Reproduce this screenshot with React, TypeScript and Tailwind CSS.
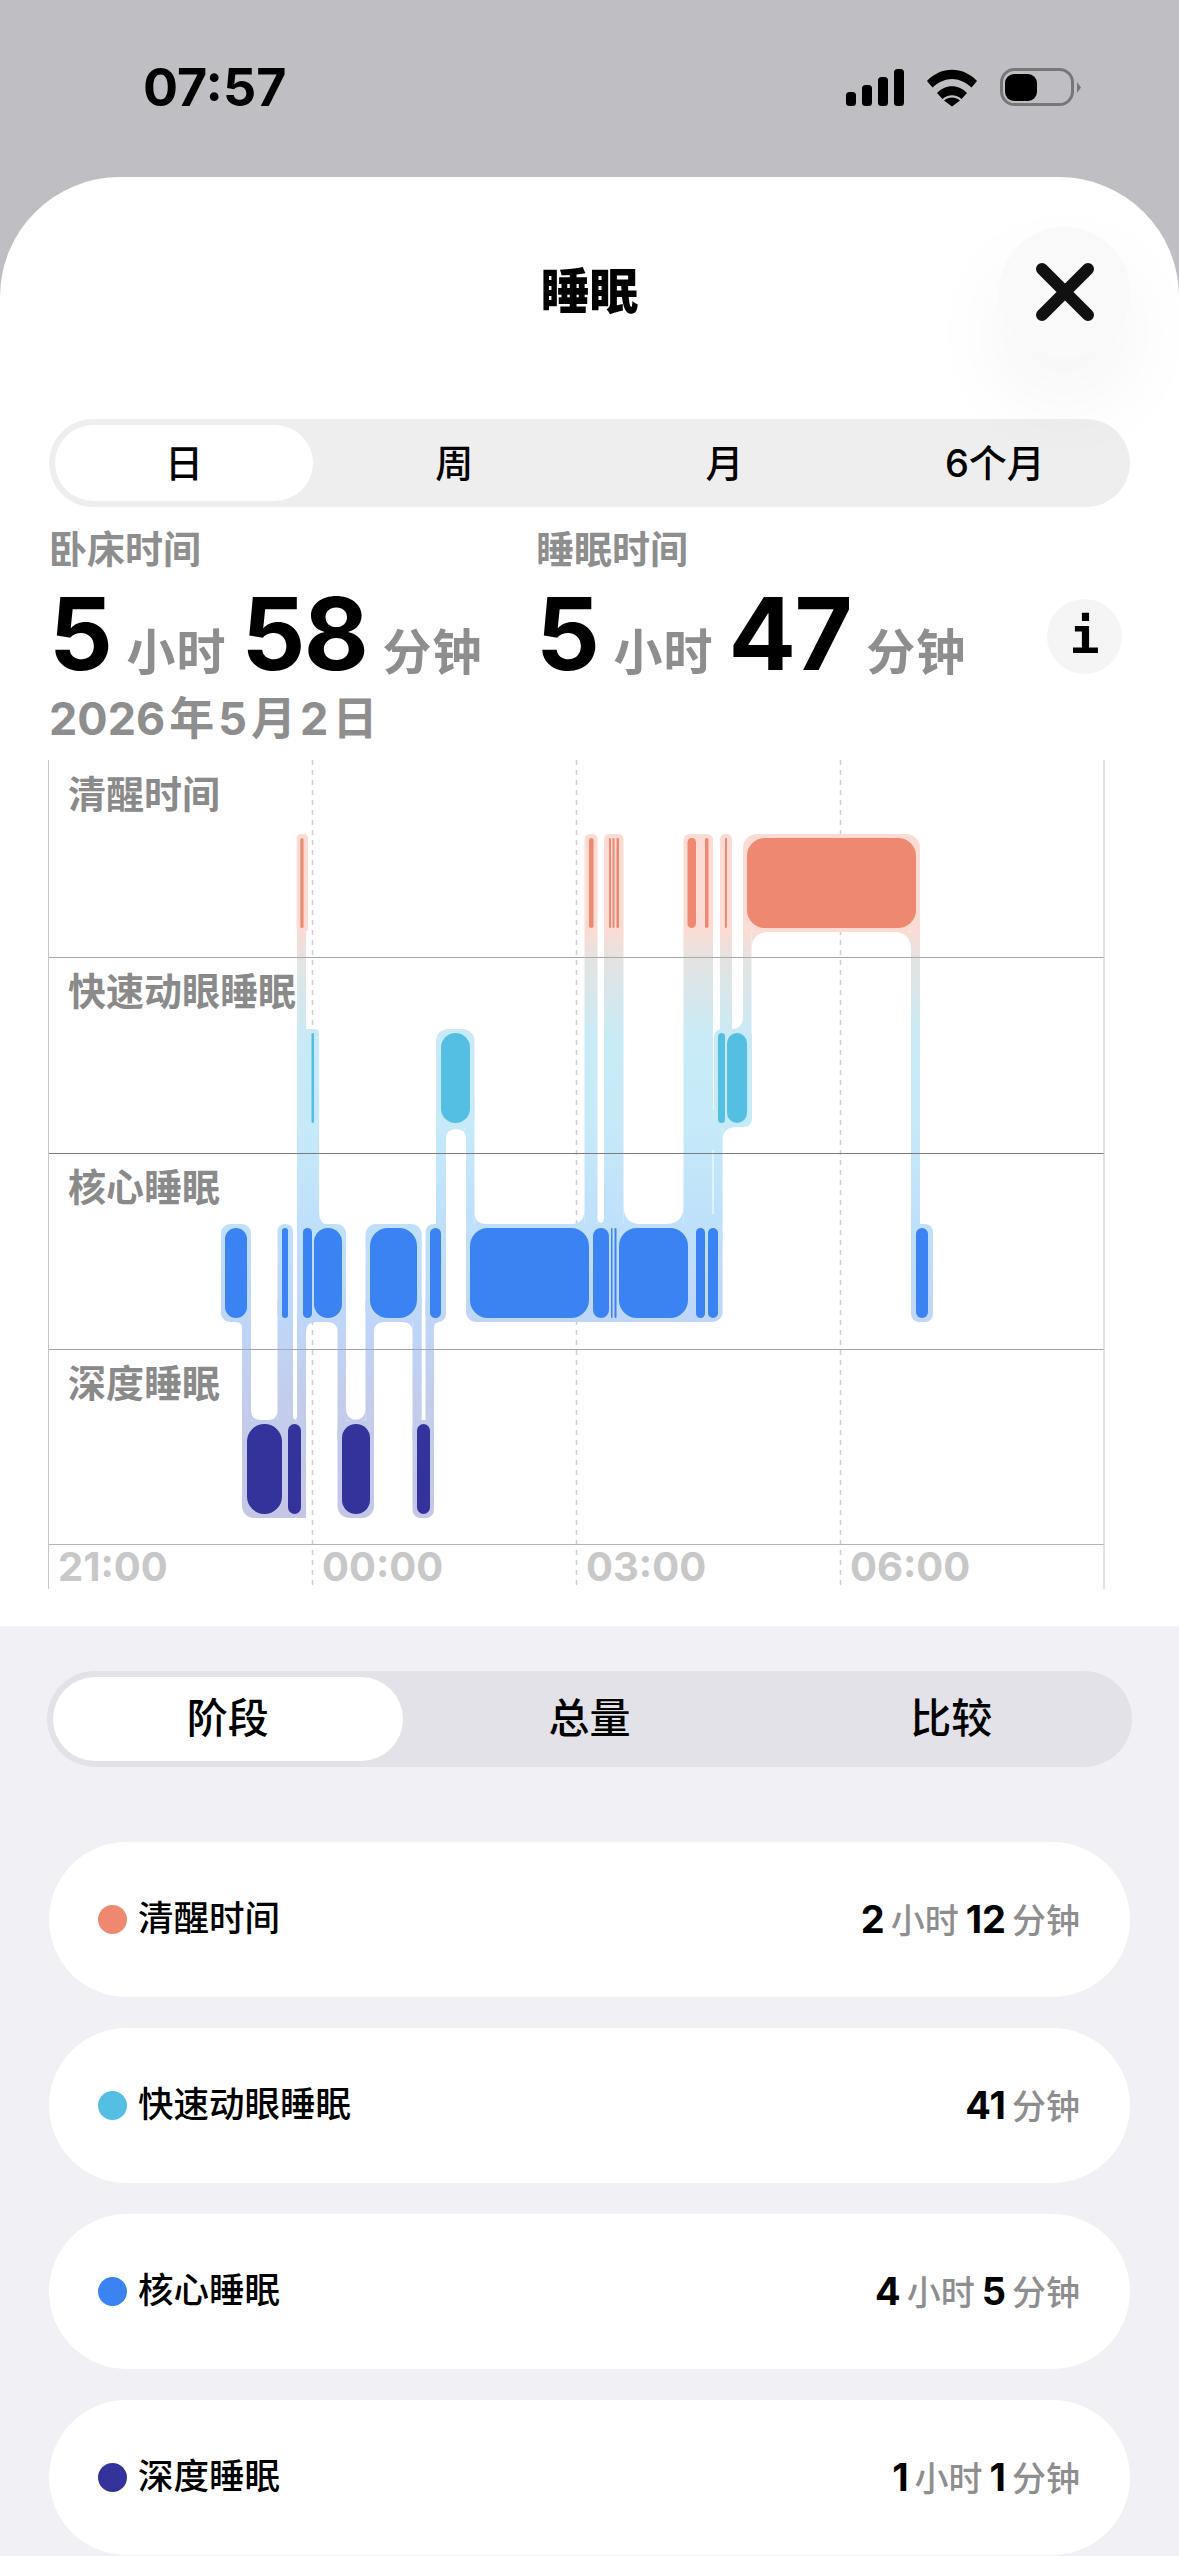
import type { ReactNode } from "react";

const sans = "font-['Inter','Noto_Sans_CJK_SC',sans-serif]";

const AWAKE = "#ef8870";
const REM = "#55bfe3";
const CORE = "#3b82f3";
const DEEP = "#33339b";

type Box = [number, number, number, number, number?];
type Fillet = [number, number, number, number, number];

// halos and connecting legs, all filled with the one vertical gradient
const halos: Box[] = [
  [296.6, 308, 834, 932, 4],
  [297, 306, 900, 1518, 0],
  [297, 319, 1029, 1240, 4],
  [584.5, 597.5, 834, 1240, 5],
  [604, 623.5, 834, 1240, 5],
  [683.5, 713, 834, 1240, 6],
  [713, 722.6, 1110, 1240, 0],
  [720, 732, 834, 1040, 5],
  [743, 920, 834, 932, 14],
  [743, 751.5, 900, 1040, 0],
  [911, 920, 900, 1240, 0],
  [436, 474.5, 1029, 1129, 12],
  [436, 446, 1100, 1240, 0],
  [466, 474.5, 1100, 1240, 0],
  [714, 752, 1029, 1127, 8],
  [221, 251, 1224, 1322, 9],
  [277.5, 293, 1224, 1322, 7],
  [297, 346, 1224, 1322, 9],
  [365.5, 421.7, 1224, 1322, 10],
  [425.5, 446, 1224, 1322, 8],
  [466, 722.6, 1224, 1322, 10],
  [911, 933, 1224, 1322, 8],
  [242, 251, 1300, 1440, 0],
  [277.5, 293, 1300, 1440, 0],
  [337.5, 346, 1300, 1440, 0],
  [365.5, 374, 1300, 1440, 0],
  [412.5, 421.7, 1300, 1440, 0],
  [425.5, 434, 1300, 1440, 0],
  [242, 305.4, 1420, 1518, 12],
  [337.5, 374, 1420, 1518, 12],
  [412.5, 434, 1420, 1518, 8],
];

// x, y, radius, x direction, y direction
const fillets: Fillet[] = [
  [751.5, 932, 18, 1, 1],
  [911, 932, 18, -1, 1],
  [743, 1029, 12, -1, -1],
  [722.6, 1127, 14, 1, 1],
  [683.5, 1224, 18, -1, -1],
  [623.5, 1224, 18, 1, -1],
  [584.5, 1224, 14, -1, -1],
  [474.5, 1224, 12, 1, -1],
  [319, 1226, 14, 1, -1],
  [446, 1129, 10, 1, 1],
  [466, 1129, 10, -1, 1],
  [597.5, 1224, 6.5, 1, -1],
  [604, 1224, 6.5, -1, -1],
  [242, 1322, 6, -1, 1],
  [251, 1420, 10, 1, -1],
  [277.5, 1420, 10, -1, -1],
  [293, 1420, 4, 1, -1],
  [297, 1420, 4, -1, -1],
  [306, 1322, 10, 1, 1],
  [337.5, 1322, 10, -1, 1],
  [346, 1420, 12, 1, -1],
  [365.5, 1420, 12, -1, -1],
  [374, 1322, 10, 1, 1],
  [412.5, 1322, 10, -1, 1],
  [434, 1322, 6, 1, 1],
];

const bars: { color: string; y: number; spans: [number, number][] }[] = [
  {
    color: AWAKE,
    y: 838,
    spans: [
      [300.4, 303.5],
      [589, 593.5],
      [609, 611],
      [612.5, 614.5],
      [616.5, 619],
      [687.5, 696],
      [705, 708.5],
      [725, 727],
      [747, 916],
    ],
  },
  {
    color: REM,
    y: 1033,
    spans: [
      [311.5, 314],
      [441, 470],
      [718, 725],
      [727, 747],
    ],
  },
  {
    color: CORE,
    y: 1228,
    spans: [
      [225, 247],
      [282, 288],
      [303, 312],
      [314, 342],
      [370, 417],
      [430, 441],
      [470, 589],
      [593, 609],
      [611, 612.5],
      [614.5, 616.5],
      [619, 688],
      [696, 705],
      [708, 718],
      [916, 928],
    ],
  },
  {
    color: DEEP,
    y: 1424,
    spans: [
      [247, 282],
      [288, 301],
      [342, 370],
      [417, 430],
    ],
  },
];

const gridLines: [number, string][] = [
  [957.5, "#a9a9a9"],
  [1153.5, "#7d7d7d"],
  [1349.5, "#a6a6a6"],
  [1544.5, "#b4b4b4"],
];

function SleepChart() {
  return (
    <svg
      className="absolute inset-0"
      width="1179"
      height="829"
      viewBox="0 760 1179 829"
      aria-hidden
    >
      <defs>
        <linearGradient id="flow" gradientUnits="userSpaceOnUse" x1="0" y1="834" x2="0" y2="1518">
          <stop offset="0.14" stopColor="#fbdcd4" />
          <stop offset="0.184" stopColor="#e4e3e2" />
          <stop offset="0.3" stopColor="#c8ebf7" />
          <stop offset="0.425" stopColor="#c6eaf8" />
          <stop offset="0.57" stopColor="#bfe0fb" />
          <stop offset="0.713" stopColor="#bfd6f8" />
          <stop offset="0.827" stopColor="#c3cdeb" />
          <stop offset="1" stopColor="#c5c6e6" />
        </linearGradient>
      </defs>
      {[312.5, 576.5, 840.5].map((x) => (
        <line key={x} x1={x} x2={x} y1="760" y2="1585" stroke="#cfcfcf" strokeWidth="1.5" strokeDasharray="5 5" />
      ))}
      {halos.map(([x1, x2, y1, y2, r], i) => (
        <rect key={i} x={x1} y={y1} width={x2 - x1} height={y2 - y1} rx={r} fill="url(#flow)" />
      ))}
      {fillets.map(([x, y, r, sx, sy], i) => (
        <path
          key={i}
          d={`M${x} ${y}L${x + sx * r} ${y}Q${x} ${y} ${x} ${y + sy * r}Z`}
          fill="url(#flow)"
        />
      ))}
      <line x1="713" x2="713" y1="1150" y2="1214" stroke="#ffffff" strokeWidth="1" />
      {gridLines.map(([y, color]) => (
        <line key={y} x1="48" x2="1104" y1={y} y2={y} stroke={color} strokeWidth="1" />
      ))}
      <line x1="48.5" x2="48.5" y1="760" y2="1589" stroke="#c6c6c6" strokeWidth="1" />
      <line x1="1104" x2="1104" y1="760" y2="1589" stroke="#c6c6c6" strokeWidth="1" />
      {bars.map((row) =>
        row.spans.map(([x1, x2]) => (
          <rect
            key={x1}
            x={x1}
            y={row.y}
            width={x2 - x1}
            height={90}
            rx={Math.min((x2 - x1) / 2, 18)}
            fill={row.color}
          />
        )),
      )}
    </svg>
  );
}

function StatusIcons() {
  return (
    <svg width="236" height="44" viewBox="0 0 236 44" aria-hidden>
      <rect x="0" y="26" width="10" height="14" rx="3.5" fill="#000" />
      <rect x="16" y="19" width="10" height="21" rx="3.5" fill="#000" />
      <rect x="32" y="11" width="10" height="29" rx="3.5" fill="#000" />
      <rect x="48" y="3" width="10" height="37" rx="3.5" fill="#000" />
      <path
        d="M81 15C95 0 117 0 131 15L125.5 21.5C113 10 99 10 86.5 21.5ZM91 27C99 18 113 18 121 27L115.5 33C110 28 102 28 96.5 33ZM98 34.5C103 30.5 109 30.5 114 34.5L106 40.5Z"
        fill="#000"
      />
      <rect x="155.5" y="3.5" width="71" height="35" rx="13" fill="none" stroke="#77777b" strokeWidth="3" />
      <rect x="159" y="8" width="32" height="27" rx="9" fill="#000" />
      <path d="M231 16L235 21.5L231 27Z" fill="#77777b" />
    </svg>
  );
}

function Unit({ children, className }: { children: ReactNode; className: string }) {
  return <span className={className}>{children}</span>;
}

function BigDuration({ h, m }: { h: string; m: string }) {
  const unit = "text-[49px] font-bold text-[#8e8e8e] tracking-[1px]";
  const num = "text-[100px] font-bold text-black leading-none tracking-[-1.5px]";
  return (
    <div className="flex items-baseline gap-[15px]">
      <span className={num}>{h}</span>
      <Unit className={unit}>小时</Unit>
      <span className={num}>{m}</span>
      <Unit className={unit}>分钟</Unit>
    </div>
  );
}

function Segmented({
  items,
  className,
  thumb,
  text,
}: {
  items: string[];
  className: string;
  thumb: string;
  text: string;
}) {
  return (
    <div className={`grid grid-flow-col auto-cols-fr rounded-full ${className}`}>
      {items.map((item, i) => (
        <div key={item} className="p-[6px]">
          <div
            className={`flex h-full items-center justify-center rounded-full text-black ${text} ${
              i === 0 ? thumb : ""
            }`}
          >
            {item}
          </div>
        </div>
      ))}
    </div>
  );
}

function StageRow({ color, label, parts }: { color: string; label: string; parts: [string, string][] }) {
  return (
    <div className="flex h-[155px] shrink-0 items-center justify-between rounded-[78px] bg-white pl-[49px] pr-[50px]">
      <div className="flex items-center gap-[11px]">
        <span className="h-[29px] w-[29px] rounded-full" style={{ background: color }} />
        <span className="text-[35.5px] font-medium text-black">{label}</span>
      </div>
      <div className="flex items-baseline gap-[7px]">
        {parts.map(([n, u]) => (
          <span key={u} className="flex items-baseline gap-[6px]">
            <span className="text-[38px] font-bold text-black">{n}</span>
            <span className="text-[34px] font-medium text-[#8e8e8e]">{u}</span>
          </span>
        ))}
      </div>
    </div>
  );
}

export default function App() {
  const rowLabel = "h-full pl-[68px] pt-[12px] text-[38px] font-bold leading-[44px] text-[#8a8a8a]";
  return (
    <div className={`flex h-[2556px] w-[1179px] flex-col overflow-hidden bg-[#f0f0f5] ${sans}`}>
      <div className="flex h-[177px] shrink-0 items-start justify-between bg-[#bfbec3] pl-[143px] pr-[97px] pt-[66px]">
        <span className="text-[52px] font-bold leading-[44px] text-black">07:57</span>
        <StatusIcons />
      </div>

      {/* grey shows behind the rounded top corners */}
      <div className="shrink-0 bg-[#bfbec3]">
        <div className="rounded-t-[120px] bg-white pb-[37px]">
          <div className="grid h-[230px] grid-cols-[1fr_auto_1fr] items-center">
            <span />
            <span className="text-[49px] font-black text-black">睡眠</span>
            <button
              type="button"
              className="mr-[49px] flex h-[131px] w-[131px] items-center justify-center justify-self-end rounded-full bg-[#f9f9f9] shadow-[0_40px_90px_rgba(0,0,0,0.05)]"
              aria-label="关闭"
            >
              <svg width="60" height="60" viewBox="0 0 60 60" aria-hidden>
                <path d="M7 7 53 53M53 7 7 53" stroke="#111" strokeWidth="12" strokeLinecap="round" />
              </svg>
            </button>
          </div>

          <div className="mx-[49px] mt-[12px]">
            <Segmented
              items={["日", "周", "月", "6个月"]}
              className="h-[88px] bg-[#eeeeee]"
              thumb="bg-white"
              text="text-[38px] font-medium"
            />
          </div>

          <div className="mx-[49px] mt-[20px]">
            <div className="grid grid-cols-[487px_1fr] text-[38px] font-bold leading-[44px] text-[#8e8e8e]">
              <span>卧床时间</span>
              <span>睡眠时间</span>
            </div>
            <div className="mt-[13px] flex items-center">
              <div className="w-[487px]">
                <BigDuration h="5" m="58" />
              </div>
              <div className="flex-1">
                <BigDuration h="5" m="47" />
              </div>
              <div className="mr-[8px] flex h-[75px] w-[75px] items-center justify-center rounded-full bg-[#f5f5f5] font-['DejaVu_Sans_Mono',monospace] text-[50px] font-bold text-black">
                i
              </div>
            </div>
            <div className="mt-[3px] flex gap-[4px] text-[45px] font-bold leading-[52px] text-[#8e8e8e]">
              <span>2026</span>
              <span>年</span>
              <span>5</span>
              <span>月</span>
              <span>2</span>
              <span>日</span>
            </div>
          </div>

          <div className="relative mt-[15px] h-[829px] w-[1179px]">
            <SleepChart />
            <div className="relative grid h-full grid-rows-[197px_196px_196px_195px_45px]">
              <div className={rowLabel}>清醒时间</div>
              <div className={rowLabel}>快速动眼睡眠</div>
              <div className={rowLabel}>核心睡眠</div>
              <div className={rowLabel}>深度睡眠</div>
              <div className="flex pl-[58px] text-[40px] font-bold leading-[45px] text-[#c8c8c8]">
                <span className="w-[264px]">21:00</span>
                <span className="w-[264px]">00:00</span>
                <span className="w-[264px]">03:00</span>
                <span className="w-[264px]">06:00</span>
              </div>
            </div>
          </div>
        </div>
      </div>

      <div className="mx-[47px] mt-[45px] shrink-0">
        <Segmented
          items={["阶段", "总量", "比较"]}
          className="h-[96px] bg-[#e2e2e8]"
          thumb="bg-white font-black"
          text="text-[41px] font-medium"
        />
      </div>

      <div className="mx-[49px] mt-[75px] flex flex-col gap-[31px]">
        <StageRow color={AWAKE} label="清醒时间" parts={[["2", "小时"], ["12", "分钟"]]} />
        <StageRow color={REM} label="快速动眼睡眠" parts={[["41", "分钟"]]} />
        <StageRow color={CORE} label="核心睡眠" parts={[["4", "小时"], ["5", "分钟"]]} />
        <StageRow color={DEEP} label="深度睡眠" parts={[["1", "小时"], ["1", "分钟"]]} />
      </div>
    </div>
  );
}
